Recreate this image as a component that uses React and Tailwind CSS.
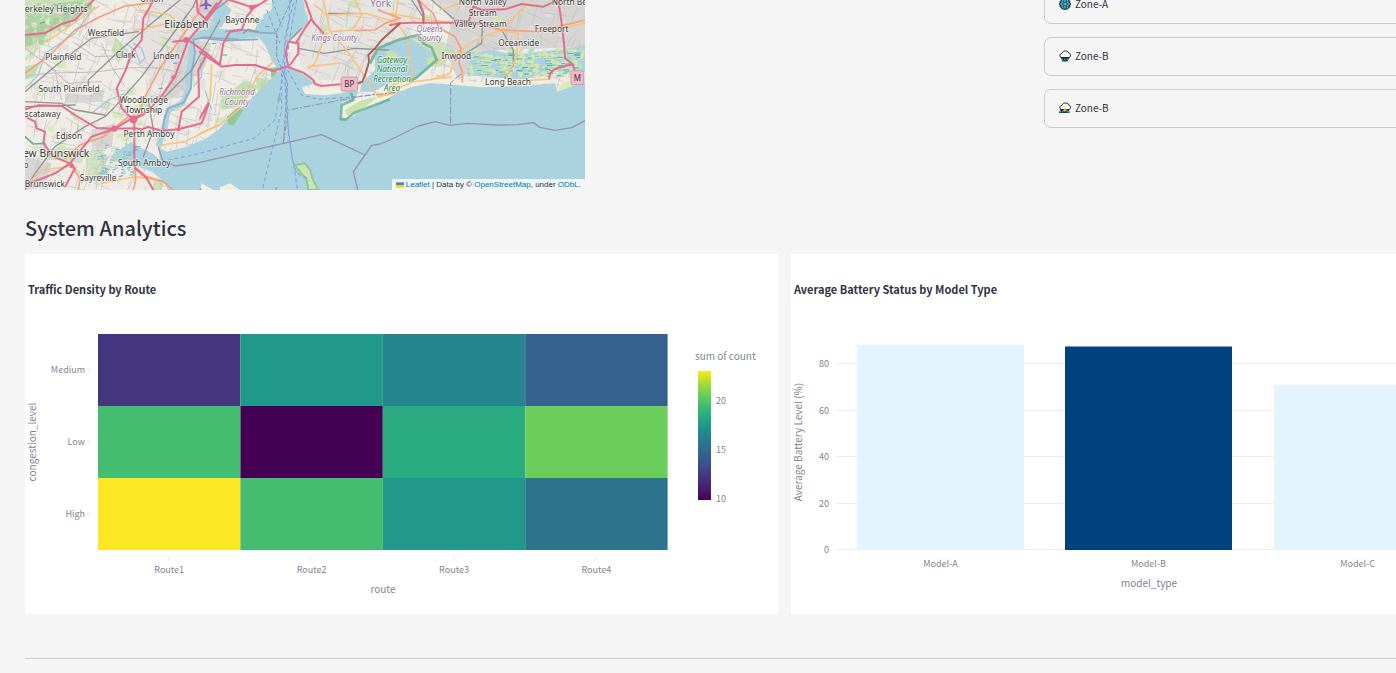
import React from "react";

const uiFont = "font-['Noto_Sans_CJK_SC','Open_Sans',sans-serif]";

/* ---------- map ---------- */

function makeRandom(seed) {
  let s = seed;
  return () => {
    s = (s * 16807) % 2147483647;
    return s / 2147483647;
  };
}

const rand = makeRandom(77);

const streets = Array.from({ length: 900 }, () => {
  const x = rand() * 1680;
  const y = rand() * 560;
  const a = (rand() < 0.5 ? 0.35 : 1.85) + rand() * 0.5 - 0.25;
  const l = 18 + rand() * 60;
  return `M${x.toFixed(0)} ${y.toFixed(0)}l${(Math.cos(a) * l).toFixed(0)} ${(Math.sin(a) * l).toFixed(0)}`;
}).join("");

const blocks = Array.from({ length: 230 }, (_, i) => ({
  x: Math.round(rand() * 1640),
  y: Math.round(rand() * 540),
  w: Math.round(9 + rand() * 22),
  h: Math.round(7 + rand() * 16),
  fill: ["#e0dfdf", "#cdebb0", "#e4dfda", "#c8e6b4", "#dedddd"][i % 5],
}));

const woods = Array.from({ length: 130 }, () => {
  const t = rand();
  return {
    x: Math.round(t * 200),
    y: Math.round(15 + (1 - t) * 165 * rand()),
    r: Math.round(4 + rand() * 8),
  };
});

const marsh = Array.from({ length: 130 }, () => ({
  x: Math.round(1325 + rand() * 335),
  y: Math.round(148 + rand() * 76),
  w: Math.round(6 + rand() * 15),
}));

const marshWest = Array.from({ length: 60 }, () => ({
  x: Math.round(215 + rand() * 120),
  y: Math.round(435 + rand() * 95),
  w: Math.round(8 + rand() * 10),
}));

const motorways = [
  "M0 105L60 99L110 72L150 60L205 0",
  "M385 0L375 20L355 55L350 120L322 155L300 215L275 265L290 325L325 360",
  "M0 328L40 316L110 318L150 345L215 384L270 386L330 385L350 388L370 381L410 392L460 388L530 370L550 315",
  "M575 10L520 85L490 120L450 230L405 295L360 340L325 360",
  "M515 0L518 35L545 60L590 0",
  "M445 125L490 120L545 160L585 195",
  "M545 165L520 210L522 290L470 335L460 388",
  "M0 350L30 365L35 385L60 395L55 430L85 470L135 490L150 505L120 560",
  "M0 552L40 540L90 520L135 490L200 410L270 386L320 355L350 345",
  "M328 365L328 470L330 505L365 535L385 570",
  "M525 155L560 180L590 200L630 195L690 195L745 213L785 200L800 205L835 218L865 240L870 252L890 258L945 253L1005 250",
  "M585 190L595 130L615 95L650 90L665 50L685 25L725 0",
  "M790 200L782 160L790 125L820 130L820 160L795 195",
  "M815 125L840 85L860 55L840 0",
  "M860 60L895 100",
  "M615 0L675 20L700 15",
  "M525 355L550 310",
  "M1095 75L1125 70L1160 68L1245 68L1330 68L1345 20",
  "M1345 20L1370 30L1440 28L1490 12L1555 20L1600 0",
  "M1600 0L1610 70L1617 130L1620 175L1642 192L1650 215",
  "M1642 192L1590 207L1575 220L1573 235",
];

const trunks = [
  "M0 220L75 165L150 90L225 50L300 18L385 8",
  "M395 330L340 340L360 290L405 205L470 110L520 40L530 0",
  "M120 475L165 435L235 410L310 350",
  "M135 490L165 535L160 570",
  "M330 500L332 540L325 570",
  "M335 505L365 530L415 545L445 570",
  "M990 92L1050 90L1080 70L1125 55",
  "M1060 30L1125 55",
  "M1245 85L1290 110L1308 145L1302 190L1312 215L1312 245",
  "M1180 0L1225 40L1240 80",
  "M1350 70L1430 90L1540 95L1680 60",
];

const primaries = [
  "M330 90L385 80L440 70",
  "M65 125L160 60L220 20",
  "M0 560L50 510L130 500",
  "M345 30L435 45L480 95",
  "M410 435L480 425L540 395L585 375L640 330L700 225L745 185",
  "M525 400L590 370M560 195L555 300L540 330",
  "M870 15L905 45L1020 40L1125 70",
  "M905 100L870 190L850 205",
  "M915 95L965 150L1020 230L1060 290L1125 275",
  "M895 0L905 45L915 95L985 90",
  "M1120 0L1110 60L1145 110L1165 235L1100 255",
  "M1060 290L1165 245L1280 230M1450 244L1575 238",
  "M1285 190L1275 220L1215 240",
  "M1410 90L1480 100L1475 170L1445 230",
  "M1230 190L1310 150L1350 120L1430 90L1510 10",
  "M1245 30L1330 0M1550 95L1680 70",
  "M1095 40L1200 60L1350 72",
  "M990 0L1010 45L985 85M850 200L940 190",
  "M230 550L330 530L420 545",
];

const rails = [
  "M0 275L95 195L200 115L340 95",
  "M190 260L190 240L280 155L380 70L465 0",
  "M0 570L30 520L90 440L180 380L240 350L270 320L350 230L430 120L505 20L512 0",
  "M0 305L110 310L150 330L240 345",
  "M585 60L500 210L410 300",
  "M355 470L385 390L370 300M0 320L150 315",
  "M525 85L570 30L610 0",
  "M795 120L830 85M820 145L900 160L990 145L1090 150",
  "M910 40L990 40",
  "M1220 0L1290 60L1380 70L1430 90L1465 150L1465 195L1440 235",
  "M1290 180L1370 130L1372 85M1160 0L1200 60",
  "M700 95L670 88L655 100",
];

const labels = [
  { t: "erkeley Heights", x: -1, y: 35, s: 26, a: "start" },
  { t: "Union", x: 380, y: 5, s: 25 },
  { t: "Westfield", x: 243, y: 108, s: 25 },
  { t: "Elizabeth", x: 484, y: 83, s: 31 },
  { t: "Plainfield", x: 115, y: 181, s: 25 },
  { t: "Clark", x: 302, y: 174, s: 25 },
  { t: "Linden", x: 424, y: 177, s: 25 },
  { t: "South Plainfield", x: 132, y: 276, s: 25 },
  { t: "Woodbridge", x: 356, y: 310, s: 25 },
  { t: "Township", x: 356, y: 340, s: 25 },
  { t: "scataway", x: -1, y: 351, s: 25, a: "start" },
  { t: "Edison", x: 132, y: 416, s: 25 },
  { t: "Perth Amboy", x: 372, y: 412, s: 25 },
  { t: "ew Brunswick", x: -6, y: 470, s: 31, a: "start" },
  { t: "South Amboy", x: 358, y: 499, s: 25 },
  { t: "Sayreville", x: 219, y: 543, s: 25 },
  { t: "Brunswick", x: -1, y: 562, s: 25, a: "start" },
  { t: "o", x: -4, y: 505, s: 24, a: "start" },
  { t: "Bayonne", x: 652, y: 69, s: 25 },
  { t: "North Valley", x: 1373, y: 15, s: 25 },
  { t: "Stream", x: 1373, y: 47, s: 25 },
  { t: "Valley Stream", x: 1366, y: 82, s: 25 },
  { t: "Freeport", x: 1580, y: 95, s: 25 },
  { t: "Oceanside", x: 1481, y: 137, s: 25 },
  { t: "Inwood", x: 1294, y: 177, s: 25 },
  { t: "Long Beach", x: 1449, y: 254, s: 25 },
  { t: "North Be", x: 1580, y: 15, s: 25, a: "start" },
];

const countyLabels = [
  { t: "Kings County", x: 928, y: 122, s: 24 },
  { t: "Richmond", x: 636, y: 286, s: 24 },
  { t: "County", x: 636, y: 314, s: 24 },
  { t: "Queens", x: 1214, y: 96, s: 24 },
  { t: "County", x: 1214, y: 124, s: 24 },
];

const parkLabels = [
  { t: "Gateway", x: 1101, y: 189 },
  { t: "National", x: 1101, y: 217 },
  { t: "Recreation", x: 1101, y: 245 },
  { t: "Area", x: 1101, y: 273 },
];

function Shield({ x, y, w, label }) {
  return (
    <g>
      <rect x={x} y={y} width={w} height="42" rx="5" fill="#e8bcc8" stroke="#d09aaa" strokeWidth="3" />
      <text x={x + w / 2} y={y + 30} fontSize="24" textAnchor="middle" fill="#5b2438">
        {label}
      </text>
    </g>
  );
}

function MapDrawing() {
  return (
    <svg viewBox="0 0 1680 570" className="block w-full font-['Noto_Sans',sans-serif]" role="img" aria-label="Map of the New York area">
      <rect width="1680" height="570" fill="#efece6" />
      <g fill="#d6d5d4">
        <path d="M395 0L560 0L540 100L470 230L400 260L330 190L300 100Z" opacity=".4" />
        <path d="M1230 0L1680 0L1680 140L1420 150L1300 240L1260 150L1280 60Z" />
        <path d="M800 100L870 0L1220 0L1160 90L1050 180L1000 240L880 240L830 200Z" opacity=".35" />
        <path d="M460 110L560 130L540 200L480 260L445 220Z M200 390L270 370L260 440L200 460Z" />
        <path d="M0 470L80 490L60 560L0 570Z M440 220L480 240L480 290L410 300Z" />
        <path d="M530 0L620 0L560 90L520 60Z M120 280L190 285L240 265L230 305L120 310Z" />
      </g>
      <g fill="#c3deb0">
        <path d="M0 0L215 0L150 52L95 95L0 185Z" opacity=".8" />
        <path d="M0 90L60 60L110 50L80 90L30 130L0 140Z M100 10L180 0L130 40Z" fill="#a5cc97" opacity=".8" />
        <path d="M55 480L100 440L180 450L170 490L110 480Z M390 535L420 540L410 570L380 570Z" opacity=".8" />
        <path d="M585 300L660 240L700 260L640 320L590 330Z M690 230L740 240L700 285Z" />
        <path d="M1150 110L1220 110L1290 150L1250 200L1200 200Z" opacity=".8" />
        <path d="M270 110L310 150L280 190L260 150Z M0 200L40 190L30 230L0 240Z" />
        <path d="M180 460L230 440L250 520L190 540Z M890 70L910 75L905 105L880 100Z" opacity=".7" />
      </g>
      {woods.map((w, i) => (
        <circle key={i} cx={w.x} cy={w.y} r={w.r} fill={i % 3 ? "#a9ce9b" : "#e4f2d0"} opacity=".6" />
      ))}
      {blocks.map((b, i) => (
        <rect key={i} x={b.x} y={b.y} width={b.w} height={b.h} rx="5" fill={b.fill} opacity=".8" />
      ))}
      <path d={streets} fill="none" stroke="#bfbdbb" strokeWidth="2" opacity=".85" />
      <path
        d="M0 230C80 210 160 225 260 210S420 205 470 220M50 180L130 250L230 245M0 145L90 210L110 300M230 130L260 200L300 260M150 130L210 170L330 165"
        fill="none" stroke="#c4bac4" strokeWidth="3"
      />
      <g fill="none" stroke="#9ccbdc" strokeWidth="4">
        <path d="M300 130L330 150L345 190L360 175L350 145L325 130" />
        <path d="M0 265L40 225L60 160L150 100L210 20M200 340L250 300L300 280" />
        <path d="M505 260L530 230L525 180L545 165M540 270L560 330" />
      </g>

      {/* water */}
      <g fill="#aad3df">
        <path d="M430 570L418 545L380 515L340 500L300 495L310 470L300 430L340 440L385 462L405 480L400 440L425 455L485 440L545 415L585 385L615 350L665 310L725 250L762 212L740 180L720 135L700 112L640 118L590 112L525 112L520 92L560 82L600 88L690 90L700 62L738 45L742 0L835 0L840 30L850 65L815 105L785 125L776 160L785 195L825 217L870 250L832 262L840 278L900 285L950 280L980 268L1000 275L985 305L950 305L945 345L965 360L1000 340L1060 310L1095 290L1155 262L1215 250L1295 248L1375 262L1500 258L1590 250L1596 275L1680 242L1680 570Z" />
        <path d="M1050 165L1080 130L1150 112L1210 150L1240 180L1210 205L1175 235L1100 245L1045 275L1005 275L1010 250L1050 210Z" />
        <path d="M1340 160L1400 150L1470 165L1540 155L1600 150L1680 135L1680 215L1560 215L1500 240L1400 232L1325 225Z" />
        <path d="M548 95L560 75L570 10L585 0L620 30L590 80Z" />
        <path d="M715 45L742 28L755 70L720 95Z" />
        <path d="M255 470L320 425L340 440L330 500L285 485Z" />
      </g>
      <g fill="none" stroke="#aad3df" strokeWidth="17" strokeLinejoin="round">
        <path d="M538 98L503 115L500 175L488 225L490 270L472 310L430 330L418 380L400 440" />
      </g>
      <g fill="none" stroke="#8fa9c8" strokeWidth="5" strokeLinejoin="round">
        <path d="M640 118L540 112L505 118L510 160L500 215L498 265L475 308L430 325L417 360L412 400" />
        <path d="M525 113L600 122L700 118M600 95L650 88L695 97L755 100" />
      </g>
      <g fill="#f2efe0">
        <path d="M830 262L870 268L940 262L980 258L975 272L900 286L840 282Z" />
        <path d="M945 355L950 315L1020 292L1080 262L1160 240L1215 233L1295 240L1380 248L1460 240L1575 232L1575 248L1460 256L1370 262L1210 248L1130 268L1080 300L1010 335Z" />
        <path d="M1595 275L1610 250L1680 225L1680 245Z" fill="#dceabb" />
        <path d="M525 570L530 550L565 570ZM585 562L615 550L645 570L585 570Z" />
      </g>
      <path d="M820 510L810 495L840 490L855 510L862 535L880 570L850 570L845 540Z" fill="#cde3b2" stroke="#8cc89b" strokeWidth="6" />
      <path d="M605 350L640 322L655 330L625 378L610 372Z M735 205L760 200L755 220L740 235Z" fill="#93c795" />
      <circle cx="763" cy="296" r="6" fill="#83bfa2" />
      <path d="M1205 175L1240 165L1230 190L1205 195Z M1085 150L1120 160L1110 190L1080 185Z" fill="#c8dfae" />
      <path d="M960 330L1010 300L1060 290L1020 320L965 348Z" fill="#c6e3b0" />

      {/* salt marsh */}
      {marsh.map((m, i) => (
        <path key={i} d={`M${m.x} ${m.y}l${m.w} -7l7 8l-6 8l-${m.w} 3z`} fill={i % 4 ? "#d3e8ae" : "#bfe0c0"} />
      ))}
      {marsh.map((m, i) => (
        <path key={i} d={`M${m.x - 4} ${m.y + 6}h${m.w}`} stroke={i % 3 ? "#8ec3dc" : "#3f9bd0"} strokeWidth="2.5" />
      ))}
      {marshWest.map((m, i) => (
        <path key={i} d={`M${m.x} ${m.y}h${m.w}m-${m.w} 8h${Math.round(m.w / 2)}`} stroke={i % 2 ? "#b5deb8" : "#6fb5d6"} strokeWidth="3" />
      ))}
      <path d="M90 15l16 -4M120 40l16 -4M45 70l14 -4M420 175l14 0M445 190l12 0M400 265l14 0M560 130l14 0M590 165l16 0M720 80l14 0" stroke="#4da3cd" strokeWidth="3" />

      {/* roads and railways */}
      <g fill="none" strokeLinejoin="round" strokeLinecap="round">
        <g stroke="#949492" strokeWidth="4">
          {rails.map((d) => <path key={d} d={d} />)}
        </g>
        <g stroke="#f8c27c" strokeWidth="4.5">
          {primaries.map((d) => <path key={d} d={d} />)}
        </g>
        <g stroke="#f79f7a" strokeWidth="5">
          {trunks.map((d) => <path key={d} d={d} />)}
        </g>
        <g stroke="#e46d8c" strokeWidth="6">
          {motorways.map((d) => <path key={d} d={d} />)}
        </g>
        <path d="M990 252L1012 245L1022 220L1032 185L1030 165L1050 145L1070 120L1125 70" stroke="#a5615e" strokeWidth="6" />
        <path d="M1180 0L1195 40L1195 70" stroke="#b97886" strokeWidth="7" />
        <path d="M0 410L25 432L60 430" stroke="#6fb183" strokeWidth="5" />
      </g>
      <g fill="#e46d8c">
        <circle cx="484" cy="120" r="9" />
        <circle cx="325" cy="358" r="12" />
        <circle cx="268" cy="386" r="9" />
        <circle cx="445" cy="232" r="6" />
        <circle cx="460" cy="388" r="6" />
        <circle cx="140" cy="497" r="7" />
        <circle cx="680" cy="22" r="8" />
      </g>

      {/* recreation area outline */}
      <path
        d="M1045 170L1060 145L1125 118L1180 105L1195 130L1220 143L1235 180L1195 215L1172 235L1150 245M978 278L985 300L950 315L947 358L965 358L985 340L1095 298M1045 170L1035 190"
        fill="none" stroke="#5fab8b" strokeWidth="8" opacity=".75" strokeLinejoin="round"
      />

      {/* boundaries and ferry routes */}
      <g fill="none" stroke="#9b8fb3" strokeWidth="4" strokeLinejoin="round">
        <path d="M400 440L412 480L450 498L525 487L775 430L890 404L1020 465L1040 436L1065 432L1095 420L1180 378L1230 365L1275 376L1325 370L1420 375L1480 374L1525 368L1545 382L1590 391L1640 383L1680 362" />
        <path d="M1020 465L985 515L998 570" />
        <path d="M525 570L528 565M752 570L755 562" />
      </g>
      <g fill="none" stroke="#8e8fac" strokeWidth="3">
        <path d="M775 430L790 330L1000 290L1130 275" strokeDasharray="20 6 5 6" />
        <path d="M1277 370L1277 248L1310 220" strokeDasharray="22 6" />
        <path d="M775 430L788 250L755 170L755 95L800 0" strokeDasharray="14 5" />
      </g>
      <g fill="none" stroke="#7f97e4" strokeWidth="3" strokeDasharray="11 9">
        <path d="M795 0L792 60L770 210L770 330L712 570" />
        <path d="M815 0L800 80L782 200L790 400L818 570" />
        <path d="M805 10L780 110L778 210L784 330L800 470L815 520L850 535" />
        <path d="M410 485L525 460L690 414L750 360L775 220" />
        <path d="M788 210L830 285L880 298L1000 290L1050 282" />
        <path d="M725 30L745 80L765 130M742 0L770 80" />
      </g>

      {/* airport */}
      <path
        transform="translate(543 12)"
        d="M0 -16L4 -10L4 -3L17 4L17 8L4 5L3 12L8 16L-8 16L-3 12L-4 5L-17 8L-17 4L-4 -3L-4 -10Z"
        fill="#8461c4"
      />

      <Shield x={948} y={231} w={50} label="BP" />
      <Shield x={1638} y={212} w={38} label="M" />

      <g strokeLinejoin="round" paintOrder="stroke" stroke="#ffffff" strokeOpacity=".6" strokeWidth="5">
        {labels.map((l) => (
          <text key={l.t} x={l.x} y={l.y} fontSize={l.s} textAnchor={l.a || "middle"} fill="#3a3a3a">
            {l.t}
          </text>
        ))}
        <text x="1067" y="20" fontSize="30" textAnchor="middle" fill="#9a76a3">York</text>
        <g fontStyle="italic" fill="#9a76a3">
          {countyLabels.map((l, i) => (
            <text key={i} x={l.x} y={l.y} fontSize={l.s} textAnchor="middle">{l.t}</text>
          ))}
        </g>
        <g fontStyle="italic" fontSize="24" fill="#2c8a3c">
          {parkLabels.map((l) => (
            <text key={l.t} x={l.x} y={l.y} textAnchor="middle">{l.t}</text>
          ))}
        </g>
      </g>
    </svg>
  );
}

function MapPanel() {
  return (
    <div className="relative w-[560px] self-start">
      <MapDrawing />
      <div className="absolute right-0 bottom-0 flex h-[11px] items-center bg-white/80 pr-1 pl-1 font-['Liberation_Sans',sans-serif] text-[8px] leading-none whitespace-pre text-[#333]">
        <svg viewBox="0 0 12 8" className="mr-[2px] h-[6px] w-2" aria-hidden="true">
          <path fill="#4c7be1" d="M0 0h12v4H0z" />
          <path fill="#ffd500" d="M0 4h12v4H0z" />
        </svg>
        <a href="#leaflet" className="text-[#0078a8]">Leaflet</a>
        <span> | Data by © </span>
        <a href="#osm" className="text-[#0078a8]">OpenStreetMap</a>
        <span>, under </span>
        <a href="#odbl" className="text-[#0078a8]">ODbL</a>
        <span>.</span>
      </div>
    </div>
  );
}

/* ---------- zones ---------- */

function SnowIcon() {
  return (
    <svg viewBox="0 0 24 24" className="size-3 shrink-0" aria-hidden="true">
      <g fill="none" strokeLinecap="round" strokeLinejoin="round">
        <g stroke="#12262c" strokeWidth="5.5">
          <path d="M12 3v18M4 7.5l16 9M20 7.5l-16 9" />
          <path d="M8.500 3.500l3.500 3.500 3.500-3.500M8.500 20.500l3.500-3.500 3.500 3.500M3 11.500l4.500-2-.5-5M21 11.500l-4.500-2 .5-5M3 12.500l4.500 2-.5 5M21 12.500l-4.500 2 .5 5" />
        </g>
        <g stroke="#45c3da" strokeWidth="2">
          <path d="M12 3v18M4 7.500l16 9M20 7.500l-16 9" />
          <path d="M8.500 3.500l3.500 3.500 3.500-3.500M8.500 20.500l3.500-3.500 3.500 3.500M3 11.500l4.500-2-.5-5M21 11.500l-4.500-2 .5-5M3 12.500l4.500 2-.5 5M21 12.500l-4.500 2 .5 5" />
        </g>
      </g>
    </svg>
  );
}

const cloudPath = "M6 15C2 15 1 12 2 10c0-2 2-3 4-3 1-4 4-5 7-5 4 0 6 2 6 4 3 0 4 3 4 5 0 3-2 4-4 4z";

function RainIcon() {
  return (
    <svg viewBox="0 0 24 24" className="size-3 shrink-0" aria-hidden="true">
      <path d="M3 14h18l-4 9H7z" fill="#16242b" />
      <path d={cloudPath} fill="#fff" stroke="#1c1c1c" strokeWidth="2" />
      <path d="M7 17l-1 3M12 17l-1 3M17 17l-1 3M10 21l-1 2M14 21l-1 2" stroke="#3aa8d8" strokeWidth="2.4" />
    </svg>
  );
}

function StormIcon() {
  return (
    <svg viewBox="0 0 24 24" className="size-3 shrink-0" aria-hidden="true">
      <path d="M3 14h17l1 8H0z" fill="#16242b" />
      <path d={cloudPath} fill="#fff" stroke="#1c1c1c" strokeWidth="2" />
      <path d="M4 17l-2 4M8 18l-1 3M17 17l-1 4M20 17l-1 4" stroke="#3aa8d8" strokeWidth="2.4" />
      <path d="M13 12l-6 6h4l-1 3 7-6h-4l2-3z" fill="#f9b934" />
    </svg>
  );
}

const zones = [
  { name: "Zone-A", Icon: SnowIcon },
  { name: "Zone-B", Icon: RainIcon },
  { name: "Zone-B", Icon: StormIcon },
];

/* ---------- charts ---------- */

const heatRows = [
  { level: "Medium", colors: ["#44367e", "#21998a", "#26848d", "#34618d"] },
  { level: "Low", colors: ["#44bd70", "#440154", "#2aab80", "#6bce5a"] },
  { level: "High", colors: ["#fde725", "#44bd70", "#21998a", "#2c738e"] },
];
const routes = ["Route1", "Route2", "Route3", "Route4"];

function Heatmap() {
  const x0 = 73;
  const y0 = 80;
  const w = 142.4;
  const h = 72;
  return (
    <svg viewBox="0 0 753 360" className="block w-full" role="img" aria-label="Traffic Density by Route">
      <defs>
        <linearGradient id="scale" x1="0" y1="1" x2="0" y2="0">
          <stop offset="0" stopColor="#440154" />
          <stop offset=".13" stopColor="#482878" />
          <stop offset=".25" stopColor="#3e4989" />
          <stop offset=".38" stopColor="#31688e" />
          <stop offset=".5" stopColor="#26828e" />
          <stop offset=".6" stopColor="#1f9e89" />
          <stop offset=".7" stopColor="#35b779" />
          <stop offset=".82" stopColor="#6ece58" />
          <stop offset=".92" stopColor="#b5de2b" />
          <stop offset="1" stopColor="#fde725" />
        </linearGradient>
      </defs>
      <text x="3" y="40" fontSize="11" fontWeight="700" fill="#31333f">Traffic Density by Route</text>
      {heatRows.map((row, r) => (
        <g key={row.level}>
          {row.colors.map((c, i) => (
            <rect key={i} x={x0 + i * w} y={y0 + r * h} width={w} height={h} fill={c} />
          ))}
          <path d={`M${x0 - 11} ${y0 + r * h + 35.5}h4`} stroke="#e6eaf1" />
          <text x="60" y={y0 + r * h + 39} fontSize="9" textAnchor="end" fill="#808495">{row.level}</text>
        </g>
      ))}
      {routes.map((t, i) => (
        <g key={t}>
          <path d={`M${Math.floor(x0 + (i + 0.5) * w) - 0.5} 303v4`} stroke="#e6eaf1" />
          <text x={x0 + (i + 0.5) * w} y="319" fontSize="9" textAnchor="middle" fill="#808495">{t}</text>
        </g>
      ))}
      <text x="358" y="339" fontSize="10" textAnchor="middle" fill="#808495">route</text>
      <text transform="translate(11 188) rotate(-90)" fontSize="10" textAnchor="middle" fill="#808495">congestion_level</text>
      <text x="670" y="106" fontSize="10" fill="#808495">sum of count</text>
      <rect x="673" y="117" width="13" height="129" fill="url(#scale)" />
      <g fontSize="9" fill="#808495">
        <text x="691" y="150">20</text>
        <text x="691" y="199">15</text>
        <text x="691" y="248">10</text>
      </g>
    </svg>
  );
}

const bars = [
  { model: "Model-A", x: 66, top: 91, fill: "#e3f4ff" },
  { model: "Model-B", x: 274, top: 92.5, fill: "#00427f" },
  { model: "Model-C", x: 483, top: 131, fill: "#e3f4ff" },
];

function BatteryChart() {
  return (
    <svg viewBox="0 0 753 360" className="block w-full" role="img" aria-label="Average Battery Status by Model Type">
      <text x="3" y="40" fontSize="11" fontWeight="700" fill="#31333f">Average Battery Status by Model Type</text>
      {[0, 20, 40, 60, 80].map((v) => {
        const y = Math.round(295 - v * 2.325) + 0.5;
        return (
          <g key={v}>
            <path d={`M45 ${y}H671`} stroke="#e9ecf1" />
            <text x="38" y={y + 3.5} fontSize="9" textAnchor="end" fill="#808495">{v}</text>
          </g>
        );
      })}
      {bars.map((b) => (
        <g key={b.model}>
          <rect x={b.x} y={b.top} width="167" height={296 - b.top} fill={b.fill} />
          <text x={b.x + 83.5} y="313" fontSize="9" textAnchor="middle" fill="#808495">{b.model}</text>
        </g>
      ))}
      <text x="358" y="333" fontSize="10" textAnchor="middle" fill="#808495">model_type</text>
      <text transform="translate(11 188) rotate(-90)" fontSize="10" textAnchor="middle" fill="#808495">
        Average Battery Level (%)
      </text>
    </svg>
  );
}

export default function App() {
  return (
    <div className={`min-h-screen overflow-hidden bg-[#f5f5f5] text-[#31333f] ${uiFont}`}>
      <main className="w-[calc(100%+173px)] px-[25px]">
        <section className="flex items-start justify-between">
          <MapPanel />
          <div className="-mt-[15px] flex w-[500px] flex-col gap-[13px]">
            {zones.map(({ name, Icon }, i) => (
              <button
                key={i}
                type="button"
                className="flex h-[39px] items-center gap-1 rounded-[7px] border border-[#cbcbcd] px-[14px] pb-[2px] text-left text-[10px] leading-4"
              >
                <Icon />
                <span>{name}</span>
              </button>
            ))}
          </div>
        </section>

        <h2 className="mt-6 mb-3 text-[20px] leading-7 font-medium">System Analytics</h2>

        <section className="grid grid-cols-2 gap-[13px]">
          <div className="bg-white"><Heatmap /></div>
          <div className="bg-white"><BatteryChart /></div>
        </section>

        <hr className="mt-11 border-[#cccccd]" />
      </main>
    </div>
  );
}
